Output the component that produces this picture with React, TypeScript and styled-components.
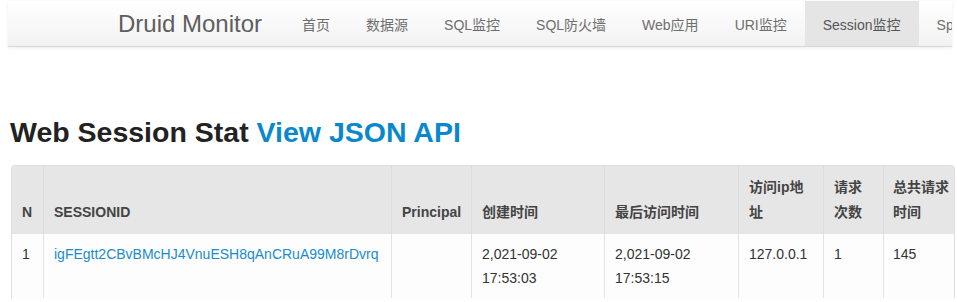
import styled, { createGlobalStyle } from "styled-components";

const GlobalStyle = createGlobalStyle`
  body {
    margin: 0;
    background: #fff;
    font-family: "Liberation Sans", Arial, "Noto Sans CJK SC", sans-serif;
    color: #333;
  }
`;

const Page = styled.div`
  width: 957px;
  padding: 1px 0 0 8px;
  box-sizing: border-box;
`;

const NavBar = styled.div`
  width: 944px;
  height: 46px;
  display: flex;
  align-items: stretch;
  padding-left: 110px;
  box-sizing: border-box;
  overflow: hidden;
  background: linear-gradient(to bottom, #ffffff, #f2f2f2);
  border-bottom: 1px solid #d6d6d6;
  box-shadow: 0 1px 4px rgba(0, 0, 0, 0.07);
`;

const Brand = styled.div`
  display: flex;
  align-items: center;
  font-size: 24px;
  color: #5e5e5e;
  margin-right: 22px;
  white-space: nowrap;
`;

const NavItem = styled.div<{ $active?: boolean }>`
  display: flex;
  align-items: center;
  padding: 0 18px;
  font-size: 14px;
  color: ${(p) => (p.$active ? "#555" : "#6e6e6e")};
  background: ${(p) => (p.$active ? "#e5e5e5" : "transparent")};
  white-space: nowrap;
  flex-shrink: 0;
`;

const Content = styled.div`
  padding: 67px 0 0 2px;
`;

const Title = styled.h1`
  margin: 0;
  font-size: 28.5px;
  line-height: 36px;
  font-weight: bold;
  color: #222;
`;

const TitleLink = styled.a`
  color: #0a88cc;
  text-decoration: none;
`;

const Table = styled.table`
  margin-top: 15px;
  margin-left: 1px;
  width: 942px;
  table-layout: fixed;
  border-collapse: separate;
  border-spacing: 0;
  border: 1px solid #dedede;
  border-bottom: none;
  border-radius: 4px 4px 0 0;
  font-size: 14px;
`;

const HeadCell = styled.th<{ $padRight: number }>`
  background: #e6e6e6;
  text-align: left;
  vertical-align: bottom;
  padding: 9px ${(p) => p.$padRight}px 9px 10px;
  line-height: 25px;
  font-weight: bold;
  color: #444;
  border-left: 1px solid #dcdcdc;
  &:first-child {
    border-left: none;
    border-top-left-radius: 4px;
  }
  &:last-child {
    padding-left: 9px;
  }
`;

const Cell = styled.td`
  vertical-align: top;
  padding: 8px 5px 8px 10px;
  line-height: 24px;
  color: #333;
  background: #fdfdfd;
  border-left: 1px solid #e2e2e2;
  &:first-child {
    border-left: none;
  }
  &:last-child {
    padding-left: 9px;
  }
`;

const SessionLink = styled.a`
  color: #1a8ccd;
  text-decoration: none;
`;

const navItems = ["首页", "数据源", "SQL监控", "SQL防火墙", "Web应用", "URI监控", "Session监控", "Spring监控"];

const columns = [
  { title: "N", width: 31, pad: 5 },
  { title: "SESSIONID", width: 348, pad: 5 },
  { title: "Principal", width: 80, pad: 5 },
  { title: "创建时间", width: 133, pad: 5 },
  { title: "最后访问时间", width: 134, pad: 5 },
  { title: "访问ip地址", width: 85, pad: 14 },
  { title: "请求次数", width: 60, pad: 12 },
  { title: "总共请求时间", width: 71, pad: 2 },
];

const sessions = [
  {
    id: "igFEgtt2CBvBMcHJ4VnuESH8qAnCRuA99M8rDvrq",
    principal: "",
    created: "2,021-09-02 17:53:03",
    lastAccess: "2,021-09-02 17:53:15",
    ip: "127.0.0.1",
    count: 1,
    total: 145,
  },
];

export default function App() {
  return (
    <>
      <GlobalStyle />
      <Page>
        <NavBar>
          <Brand>Druid Monitor</Brand>
          {navItems.map((item) => (
            <NavItem key={item} $active={item === "Session监控"}>
              {item}
            </NavItem>
          ))}
        </NavBar>
        <Content>
          <Title>
            Web Session Stat <TitleLink href="#">View JSON API</TitleLink>
          </Title>
          <Table>
            <colgroup>
              {columns.map((c) => (
                <col key={c.title} style={{ width: c.width }} />
              ))}
            </colgroup>
            <thead>
              <tr>
                {columns.map((c) => (
                  <HeadCell key={c.title} $padRight={c.pad}>
                    {c.title}
                  </HeadCell>
                ))}
              </tr>
            </thead>
            <tbody>
              {sessions.map((s, i) => (
                <tr key={s.id}>
                  <Cell>{i + 1}</Cell>
                  <Cell>
                    <SessionLink href="#">{s.id}</SessionLink>
                  </Cell>
                  <Cell>{s.principal}</Cell>
                  <Cell>{s.created}</Cell>
                  <Cell>{s.lastAccess}</Cell>
                  <Cell>{s.ip}</Cell>
                  <Cell>{s.count}</Cell>
                  <Cell>{s.total}</Cell>
                </tr>
              ))}
            </tbody>
          </Table>
        </Content>
      </Page>
    </>
  );
}
